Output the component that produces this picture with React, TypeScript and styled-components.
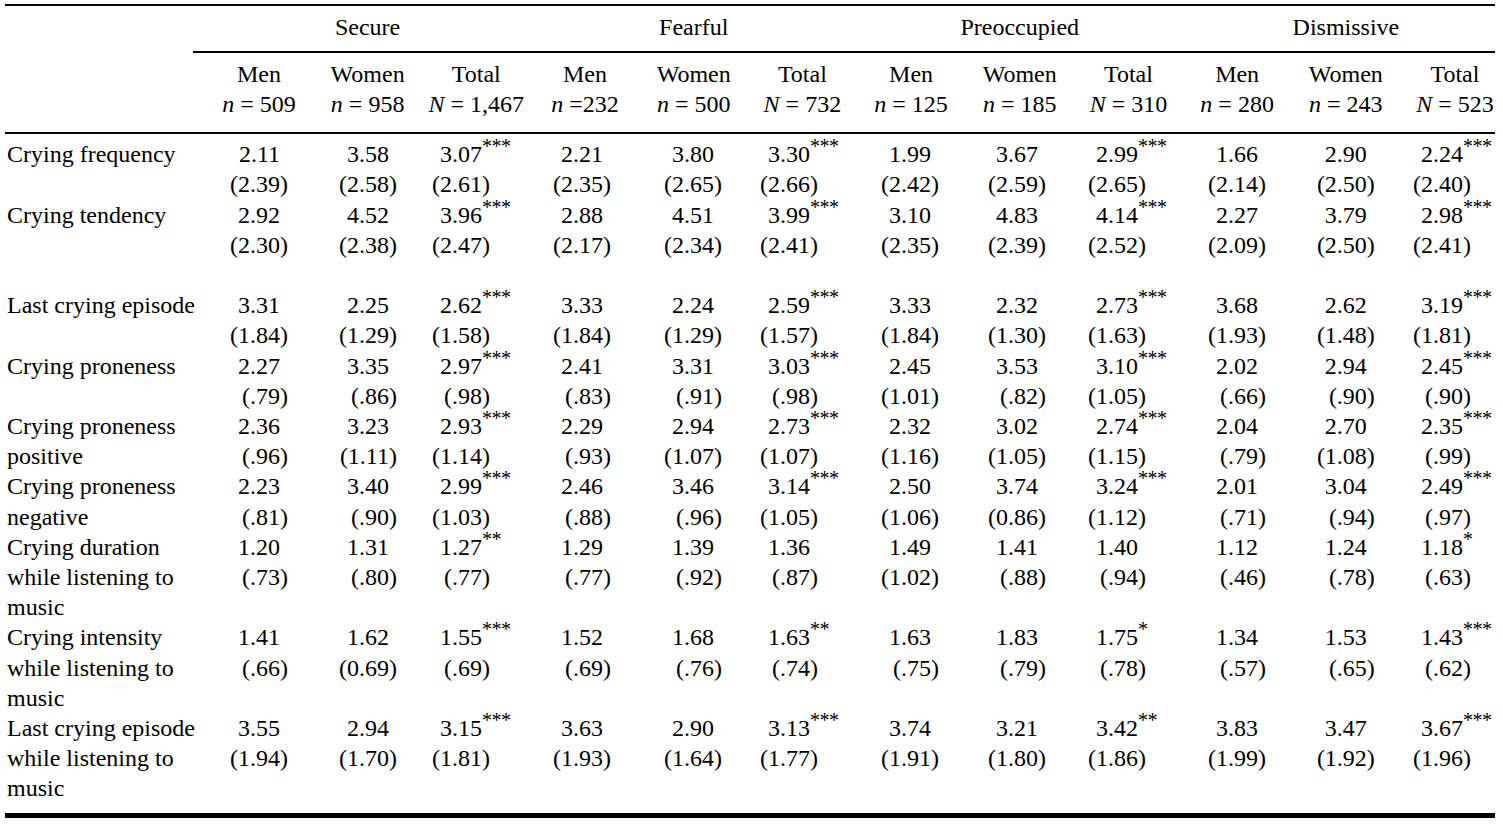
import React from "react";
import styled, { createGlobalStyle, css } from "styled-components";

const GlobalStyle = createGlobalStyle`
  html, body {
    margin: 0;
    padding: 0;
    background: #fff;
  }
`;

const gridCols = css`
  display: grid;
  grid-template-columns: 199.6px repeat(11, 108.7px) 1fr;
`;

const Sheet = styled.div`
  width: 1490px;
  margin: 4px 0 0 5px;
  border-top: 2px solid #000;
  border-bottom: 5px solid #000;
  font-family: "Liberation Serif", "Times New Roman", serif;
  font-size: 24px;
  line-height: 30.2px;
  color: #000;
`;

const GroupRow = styled.div`
  ${gridCols}
`;

const Corner = styled.div``;

const GroupCell = styled.div<{ $first?: boolean; $last?: boolean }>`
  grid-column: span 3;
  padding: 6px 0 9px;
  text-align: center;
  border-bottom: 2px solid #000;
  ${p => p.$first && css`
    margin-left: -11.6px;
    padding-left: 11.6px;
  `}
  ${p => p.$last && css`
    padding-left: 14px;
  `}
`;

const HeadRow = styled.div`
  ${gridCols}
  padding: 6px 0 12px;
  border-bottom: 2px solid #000;
`;

const ColHead = styled.div<{ $last?: boolean }>`
  text-align: center;
  white-space: nowrap;
  ${p => p.$last && css`
    padding-left: 14.7px;
  `}
`;

const Var = styled.span`
  font-style: italic;
`;

const Body = styled.div`
  padding: 5.6px 0 9px;
`;

const DataRow = styled.div`
  ${gridCols}
`;

const Spacer = styled.div`
  height: 30.2px;
`;

const Label = styled.div`
  padding: 0 6px 0 2px;
`;

const ValueCell = styled.div<{ $pad: number }>`
  text-align: right;
  white-space: nowrap;
  padding-right: ${p => p.$pad}px;
`;

const Mean = styled.div`
  padding-right: 8px;
`;

const Stars = styled.span`
  display: inline-block;
  width: 0;
  white-space: nowrap;
  text-align: left;
  font-size: 20px;
  letter-spacing: -0.5px;
  line-height: 0;
  vertical-align: 9px;
`;

// distance from the right edge of each column to the closing paren
const pads = [25.3, 25, 40.7, 28.4, 26.1, 38.8, 26.5, 28.2, 36.9, 25.6, 25.3, 24];

const groups = ["Secure", "Fearful", "Preoccupied", "Dismissive"];

const heads: { label: string; v: string; eq: string }[] = [
  { label: "Men", v: "n", eq: " = 509" },
  { label: "Women", v: "n", eq: " = 958" },
  { label: "Total", v: "N", eq: " = 1,467" },
  { label: "Men", v: "n", eq: " =232" },
  { label: "Women", v: "n", eq: " = 500" },
  { label: "Total", v: "N", eq: " = 732" },
  { label: "Men", v: "n", eq: " = 125" },
  { label: "Women", v: "n", eq: " = 185" },
  { label: "Total", v: "N", eq: " = 310" },
  { label: "Men", v: "n", eq: " = 280" },
  { label: "Women", v: "n", eq: " = 243" },
  { label: "Total", v: "N", eq: " = 523" },
];

const rows: { label: string; cells: string[]; gapBefore?: boolean }[] = [
  {
    label: "Crying frequency",
    cells: [
      "2.11 (2.39)", "3.58 (2.58)", "3.07*** (2.61)",
      "2.21 (2.35)", "3.80 (2.65)", "3.30*** (2.66)",
      "1.99 (2.42)", "3.67 (2.59)", "2.99*** (2.65)",
      "1.66 (2.14)", "2.90 (2.50)", "2.24*** (2.40)",
    ],
  },
  {
    label: "Crying tendency",
    cells: [
      "2.92 (2.30)", "4.52 (2.38)", "3.96*** (2.47)",
      "2.88 (2.17)", "4.51 (2.34)", "3.99*** (2.41)",
      "3.10 (2.35)", "4.83 (2.39)", "4.14*** (2.52)",
      "2.27 (2.09)", "3.79 (2.50)", "2.98*** (2.41)",
    ],
  },
  {
    label: "Last crying episode",
    gapBefore: true,
    cells: [
      "3.31 (1.84)", "2.25 (1.29)", "2.62*** (1.58)",
      "3.33 (1.84)", "2.24 (1.29)", "2.59*** (1.57)",
      "3.33 (1.84)", "2.32 (1.30)", "2.73*** (1.63)",
      "3.68 (1.93)", "2.62 (1.48)", "3.19*** (1.81)",
    ],
  },
  {
    label: "Crying proneness",
    cells: [
      "2.27 (.79)", "3.35 (.86)", "2.97*** (.98)",
      "2.41 (.83)", "3.31 (.91)", "3.03*** (.98)",
      "2.45 (1.01)", "3.53 (.82)", "3.10*** (1.05)",
      "2.02 (.66)", "2.94 (.90)", "2.45*** (.90)",
    ],
  },
  {
    label: "Crying proneness positive",
    cells: [
      "2.36 (.96)", "3.23 (1.11)", "2.93*** (1.14)",
      "2.29 (.93)", "2.94 (1.07)", "2.73*** (1.07)",
      "2.32 (1.16)", "3.02 (1.05)", "2.74*** (1.15)",
      "2.04 (.79)", "2.70 (1.08)", "2.35*** (.99)",
    ],
  },
  {
    label: "Crying proneness negative",
    cells: [
      "2.23 (.81)", "3.40 (.90)", "2.99*** (1.03)",
      "2.46 (.88)", "3.46 (.96)", "3.14*** (1.05)",
      "2.50 (1.06)", "3.74 (0.86)", "3.24*** (1.12)",
      "2.01 (.71)", "3.04 (.94)", "2.49*** (.97)",
    ],
  },
  {
    label: "Crying duration while listening to music",
    cells: [
      "1.20 (.73)", "1.31 (.80)", "1.27** (.77)",
      "1.29 (.77)", "1.39 (.92)", "1.36 (.87)",
      "1.49 (1.02)", "1.41 (.88)", "1.40 (.94)",
      "1.12 (.46)", "1.24 (.78)", "1.18* (.63)",
    ],
  },
  {
    label: "Crying intensity while listening to music",
    cells: [
      "1.41 (.66)", "1.62 (0.69)", "1.55*** (.69)",
      "1.52 (.69)", "1.68 (.76)", "1.63** (.74)",
      "1.63 (.75)", "1.83 (.79)", "1.75* (.78)",
      "1.34 (.57)", "1.53 (.65)", "1.43*** (.62)",
    ],
  },
  {
    label: "Last crying episode while listening to music",
    cells: [
      "3.55 (1.94)", "2.94 (1.70)", "3.15*** (1.81)",
      "3.63 (1.93)", "2.90 (1.64)", "3.13*** (1.77)",
      "3.74 (1.91)", "3.21 (1.80)", "3.42** (1.86)",
      "3.83 (1.99)", "3.47 (1.92)", "3.67*** (1.96)",
    ],
  },
];

function Value({ text, pad }: { text: string; pad: number }) {
  const [first, sd] = text.split(" ");
  const m = first.match(/^([\d.]+)(\**)$/);
  const mean = m ? m[1] : first;
  const stars = m ? m[2] : "";
  return (
    <ValueCell $pad={pad}>
      <Mean>
        {mean}
        {stars && <Stars>{stars}</Stars>}
      </Mean>
      <div>{sd}</div>
    </ValueCell>
  );
}

export default function App() {
  return (
    <>
      <GlobalStyle />
      <Sheet>
        <GroupRow>
          <Corner />
          {groups.map((g, i) => (
            <GroupCell key={g} $first={i === 0} $last={i === groups.length - 1}>
              {g}
            </GroupCell>
          ))}
        </GroupRow>
        <HeadRow>
          <Corner />
          {heads.map((h, i) => (
            <ColHead key={i} $last={i === heads.length - 1}>
              <div>{h.label}</div>
              <div>
                <Var>{h.v}</Var>
                {h.eq}
              </div>
            </ColHead>
          ))}
        </HeadRow>
        <Body>
          {rows.map(r => (
            <React.Fragment key={r.label}>
              {r.gapBefore && <Spacer />}
              <DataRow>
                <Label>{r.label}</Label>
                {r.cells.map((c, i) => (
                  <Value key={i} text={c} pad={pads[i]} />
                ))}
              </DataRow>
            </React.Fragment>
          ))}
        </Body>
      </Sheet>
    </>
  );
}
